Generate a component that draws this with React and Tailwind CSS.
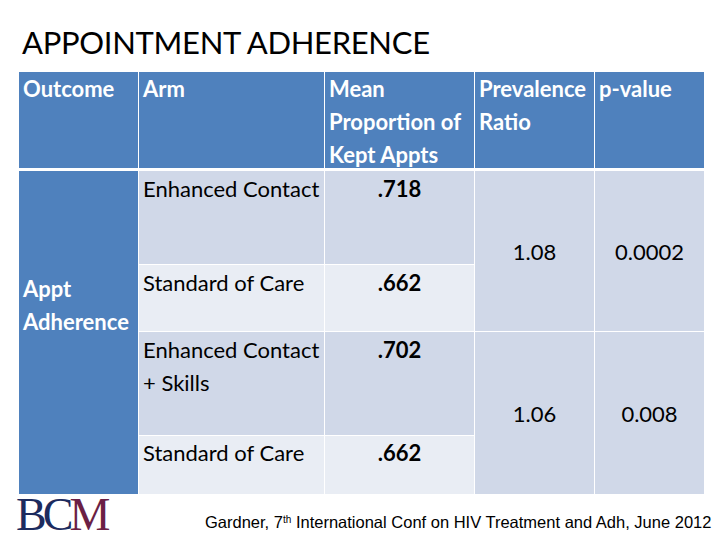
import React from 'react';

const Cell = ({ className = '', children }) => (
  <div className={`px-[4px] leading-[33px] ${className}`}>{children}</div>
);

const App = () => {
  return (
    <div className="w-[720px] h-[540px] bg-white relative overflow-hidden font-['Lato',sans-serif]">
      {/* Title */}
      <h1 className="absolute left-[22px] top-[22px] text-[31px] leading-[40px] text-black tracking-[-0.3px]">
        APPOINTMENT ADHERENCE
      </h1>

      {/* Table */}
      <div className="absolute left-[19px] top-[72px] grid grid-cols-[119px_185px_149px_119px_109px] grid-rows-[98px_93px_66px_103px_58px] gap-px text-[22px]">
        {/* header */}
        <Cell className="bg-[#4f81bd] text-white font-bold border-b-2 border-white">Outcome</Cell>
        <Cell className="bg-[#4f81bd] text-white font-bold border-b-2 border-white">Arm</Cell>
        <Cell className="bg-[#4f81bd] text-white font-bold border-b-2 border-white">
          Mean<br />Proportion of<br />Kept Appts
        </Cell>
        <Cell className="bg-[#4f81bd] text-white font-bold border-b-2 border-white">
          Prevalence<br />Ratio
        </Cell>
        <Cell className="bg-[#4f81bd] text-white font-bold border-b-2 border-white">p-value</Cell>

        {/* outcome */}
        <Cell className="row-span-4 bg-[#4f81bd] text-white font-bold pt-[101px]">
          Appt<br />Adherence
        </Cell>

        {/* row 1 */}
        <Cell className="bg-[#d0d8e8] pt-px">Enhanced Contact</Cell>
        <Cell className="bg-[#d0d8e8] pt-px text-center font-bold">.718</Cell>
        <div className="row-span-2 bg-[#d0d8e8] flex items-center justify-center">1.08</div>
        <div className="row-span-2 bg-[#d0d8e8] flex items-center justify-center">0.0002</div>

        {/* row 2 */}
        <Cell className="bg-[#e9edf4] pt-px">Standard of Care</Cell>
        <Cell className="bg-[#e9edf4] pt-px text-center font-bold">.662</Cell>

        {/* row 3 */}
        <Cell className="bg-[#d0d8e8] pt-px">Enhanced Contact<br />+ Skills</Cell>
        <Cell className="bg-[#d0d8e8] pt-px text-center font-bold">.702</Cell>
        <div className="row-span-2 bg-[#d0d8e8] flex items-center justify-center">1.06</div>
        <div className="row-span-2 bg-[#d0d8e8] flex items-center justify-center">0.008</div>

        {/* row 4 */}
        <Cell className="bg-[#e9edf4]">Standard of Care</Cell>
        <Cell className="bg-[#e9edf4] text-center font-bold">.662</Cell>
      </div>

      {/* Footer */}
      <div className="absolute left-[16px] top-[492px] font-['Liberation_Serif',serif] text-[46px] leading-[46px] tracking-[-4px]">
        <span className="text-[#1c2b5e]">BC</span>
        <span className="text-[#6b1f45]">M</span>
      </div>
      <p className="absolute left-[205px] top-[512px] font-['Liberation_Sans',sans-serif] text-[16.5px] leading-[20px] text-black">
        Gardner, 7<sup className="text-[10px]">th</sup> International Conf on HIV Treatment and Adh, June 2012
      </p>
    </div>
  );
};

export default App;
